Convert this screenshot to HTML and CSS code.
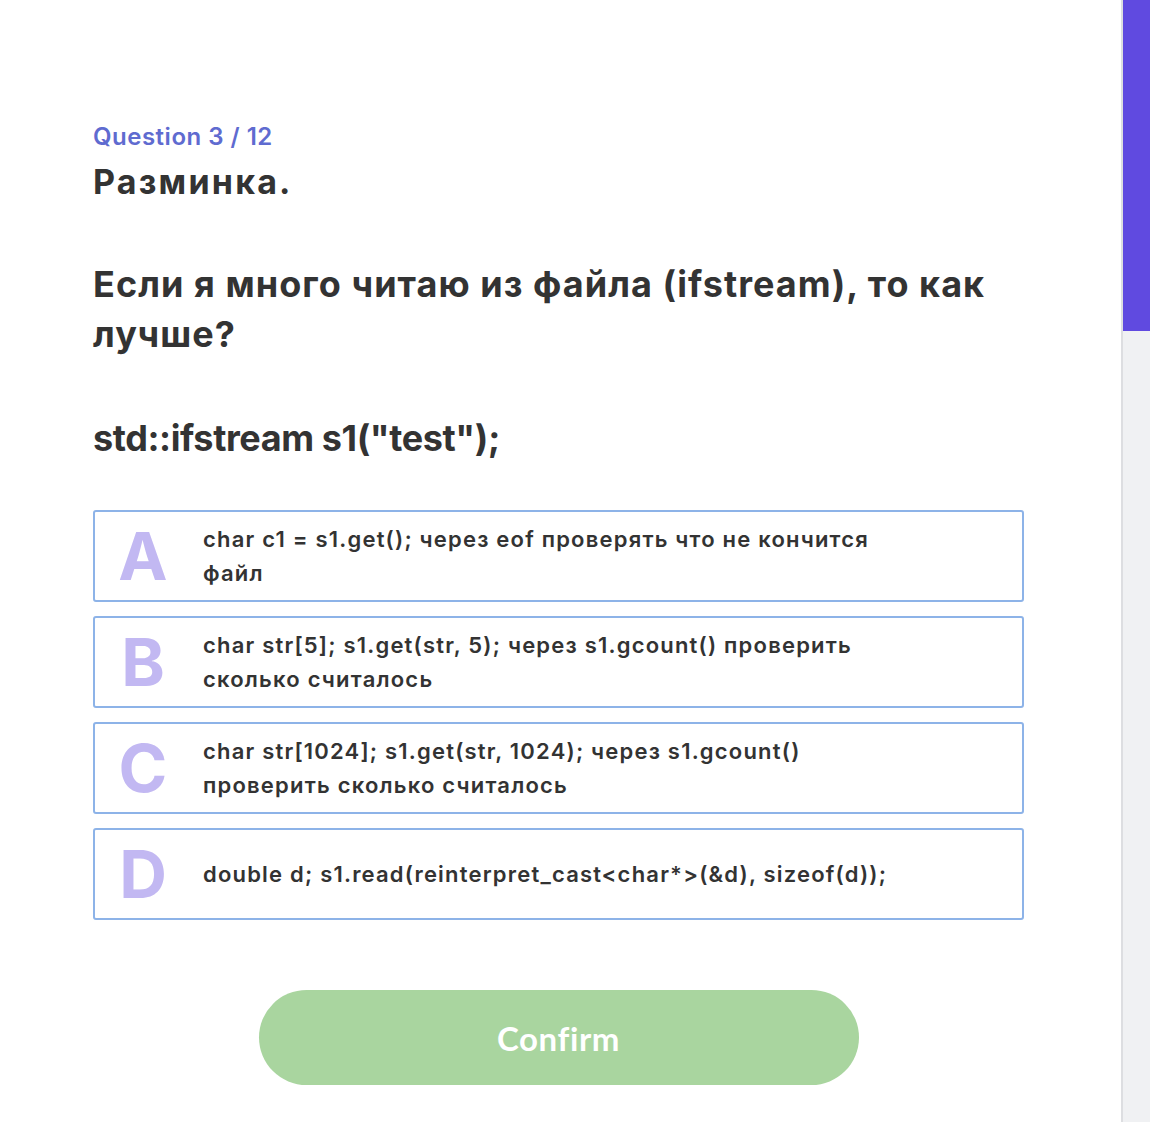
FILE: index.html
```html
<!DOCTYPE html>
<html lang="ru">
<head>
<meta charset="utf-8">
<link rel="stylesheet" href="styles.css">
</head>
<body>
<div class="layout">
  <main class="quiz">
    <div class="counter">Question 3 / 12</div>
    <h1 class="title">Разминка.</h1>
    <p class="question">Если я много читаю из файла (ifstream), то как лучше?</p>
    <p class="question code">std::ifstream s1("test");</p>
    <ul class="answers">
      <li class="answer"><span class="letter">A</span><span class="text">char c1 = s1.get(); через eof проверять что не кончится файл</span></li>
      <li class="answer"><span class="letter">B</span><span class="text">char str[5]; s1.get(str, 5); через s1.gcount() проверить сколько считалось</span></li>
      <li class="answer"><span class="letter">C</span><span class="text">char str[1024]; s1.get(str, 1024); через s1.gcount() проверить сколько считалось</span></li>
      <li class="answer"><span class="letter">D</span><span class="text">double d; s1.read(reinterpret_cast&lt;char*&gt;(&amp;d), sizeof(d));</span></li>
    </ul>
    <div class="actions"><button class="confirm">Confirm</button></div>
  </main>
  <div class="scrollbar"><div class="thumb"></div></div>
</div>
</body>
</html>
```
FILE: styles.css
```css
html, body {
  margin: 0;
  padding: 0;
  background: #ffffff;
}
body {
  font-family: Inter, "Noto Sans", sans-serif;
  color: #333333;
}
.layout {
  display: flex;
  height: 1122px;
  overflow: hidden;
}
.quiz {
  flex: 1;
  padding: 122px 0 0 93px;
}
.counter {
  font-size: 24px;
  line-height: 30px;
  font-weight: 600;
  letter-spacing: 0.5px;
  color: #5f6bd0;
}
.title {
  margin: 9px 0 0;
  font-size: 34px;
  line-height: 42px;
  font-weight: 700;
  letter-spacing: 2.2px;
  color: #333333;
}
.question {
  margin: 56px 0 0;
  width: 931px;
  font-size: 36px;
  line-height: 50px;
  font-weight: 700;
  letter-spacing: 1.05px;
  color: #333333;
}
.question.code {
  margin-top: 54px;
  letter-spacing: -0.4px;
}
.answers {
  list-style: none;
  margin: 47px 0 0;
  padding: 0;
  width: 931px;
  display: flex;
  flex-direction: column;
  gap: 14px;
}
.answer {
  box-sizing: border-box;
  height: 92px;
  border: 2px solid #8db3e8;
  border-radius: 3px;
  display: flex;
  align-items: center;
}
.letter {
  width: 96px;
  flex: none;
  text-align: center;
  font-size: 66px;
  font-weight: 700;
  line-height: 1;
  color: #c2b8f2;
  margin-right: 12px;
}
.text {
  max-width: 705px;
  font-size: 22px;
  line-height: 34px;
  font-weight: 600;
  letter-spacing: 1.2px;
  color: #333333;
}
.actions {
  width: 931px;
  display: flex;
  justify-content: center;
  margin-top: 70px;
}
.confirm {
  width: 600px;
  height: 95px;
  border: none;
  border-radius: 48px;
  background: #a9d59f;
  color: #ffffff;
  font-family: Lato, Inter, sans-serif;
  font-size: 33px;
  font-weight: 700;
  letter-spacing: 0.6px;
  padding: 0;
}
.scrollbar {
  width: 27px;
  flex: none;
  background: #f0f1f3;
  border-left: 2px solid #dddee1;
}
.thumb {
  height: 331px;
  background: #604ae0;
}
```
